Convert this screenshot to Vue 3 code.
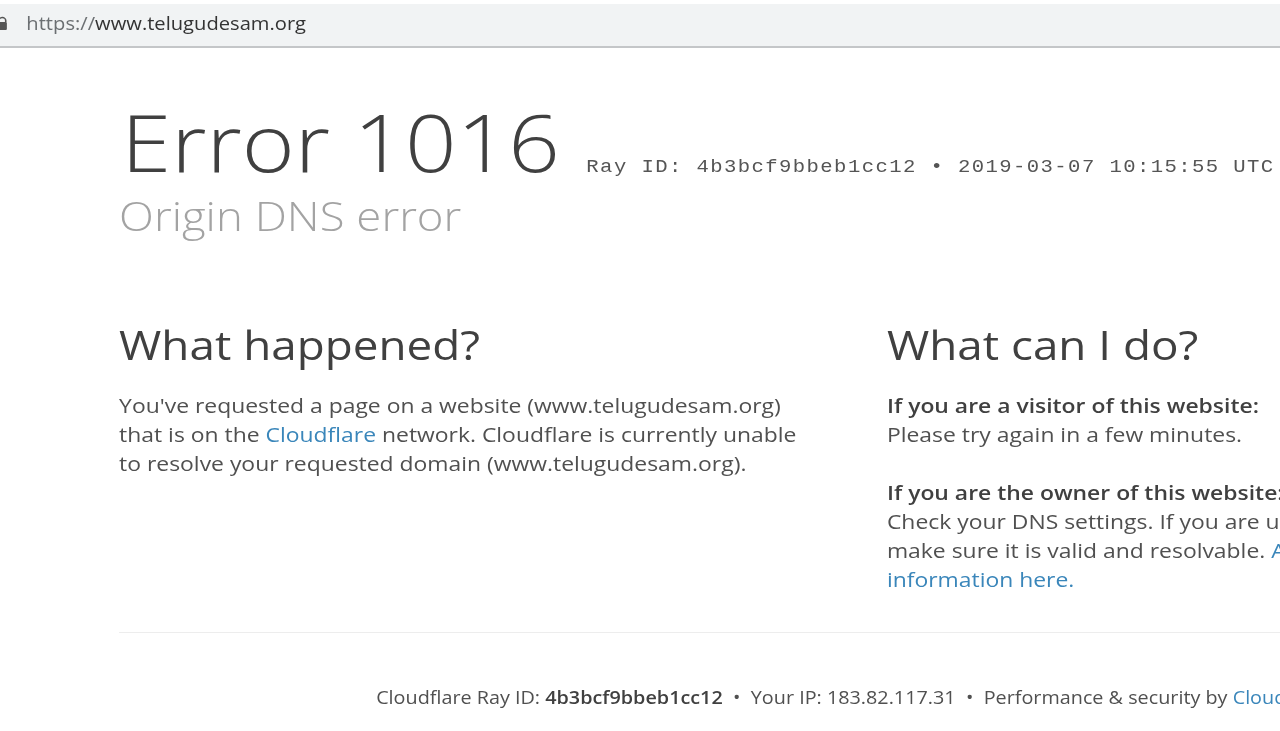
<template>
  <div class="page">
    <!-- address bar -->
    <div class="addr-bar">
      <svg class="lock" width="8" height="14" viewBox="0 0 8 14">
        <path d="M-1 6V4.5a3 3 0 0 1 6 0V6" fill="none" stroke="#555" stroke-width="1.4" />
        <rect x="-3" y="6" width="9" height="8" rx="1" fill="#555" />
      </svg>
      <span class="url"><span class="scheme">https://</span>www.telugudesam.org</span>
    </div>

    <div class="wrap">
      <div class="head">
        <div class="title-row">
          <h1>Error 1016</h1>
          <span class="ray">Ray ID: 4b3bcf9bbeb1cc12 &bull; 2019-03-07 10:15:55 UTC</span>
        </div>
        <h2 class="subtitle">Origin DNS error</h2>
      </div>

      <div class="cols">
        <div class="col col-left">
          <h2>What happened?</h2>
          <p>You've requested a page on a website (www.telugudesam.org)<br />that is on the <a>Cloudflare</a> network. Cloudflare is currently unable<br />to resolve your requested domain (www.telugudesam.org).</p>
        </div>
        <div class="col col-right">
          <h2>What can I do?</h2>
          <p class="gap"><b>If you are a visitor of this website:</b><br />Please try again in a few minutes.</p>
          <p><b>If you are the owner of this website:</b><br />Check your DNS settings. If you are using a CNAME origin record,<br />make sure it is valid and resolvable. <a>Additional</a><br /><a>information here.</a></p>
        </div>
      </div>

      <div class="footer">
        <span>Cloudflare Ray ID: <b>4b3bcf9bbeb1cc12</b></span>
        <span class="dot">&bull;</span>
        <span>Your IP: 183.82.117.31</span>
        <span class="dot">&bull;</span>
        <span>Performance &amp; security by <a>Cloudflare</a></span>
      </div>
    </div>
  </div>
</template>

<script setup>
</script>

<style>
html, body { margin: 0; background: #fff; overflow: hidden; }
</style>

<style scoped>
/* the reference is a screenshot stretched sideways, so the whole page is too */
.page {
  width: 1118px;
  height: 731px;
  transform: scaleX(1.145);
  transform-origin: 0 0;
  filter: blur(0.4px);
  font-family: "Open Sans", "Noto Sans", sans-serif;
  color: #404040;
}
.addr-bar {
  margin-top: 4px;
  height: 42px;
  background: #f1f3f4;
  border-bottom: 2px solid #c4c6c8;
  display: flex;
  align-items: center;
  gap: 15px;
}
.lock { flex: none; margin-top: -4px; }
.url { font-size: 17.6px; color: #333; margin-top: -5px; white-space: nowrap; }
.scheme { color: #6b6f72; }
.wrap { margin-left: 104px; width: 1300px; }
.head { padding-top: 44px; }
.title-row { display: flex; align-items: baseline; white-space: nowrap; }
h1 {
  margin: 0 0 0 2px;
  font-size: 79px;
  font-weight: 300;
  line-height: 100px;
  color: #404040;
}
.ray {
  font-family: "Liberation Mono", monospace;
  font-size: 18px;
  letter-spacing: 1.22px;
  color: #555;
  margin-left: 23px;
}
.subtitle {
  margin: -3px 0 0;
  font-size: 39.8px;
  font-weight: 300;
  line-height: 54px;
  color: #a3a3a3;
}
.cols { display: flex; margin-top: 76px; }
.col h2 {
  margin: -1px 0 19px;
  font-size: 40px;
  font-weight: 400;
  line-height: 54px;
  color: #404040;
}
.col-left { width: 670.6px; }
.col-right { white-space: nowrap; }
p {
  margin: 0;
  font-size: 20px;
  line-height: 29px;
  color: #505050;
  white-space: nowrap;
}
p.gap { margin-bottom: 29px; }
b { font-weight: 600; color: #404040; }
a { color: #3a86ba; }
.footer {
  margin-top: 38px;
  border-top: 1px solid #ededed;
  padding-top: 52px;
  padding-left: 224.5px;
  font-size: 17.3px;
  line-height: 26px;
  color: #505050;
  white-space: nowrap;
  display: flex;
}
.dot { margin: 0 9px; }
</style>
